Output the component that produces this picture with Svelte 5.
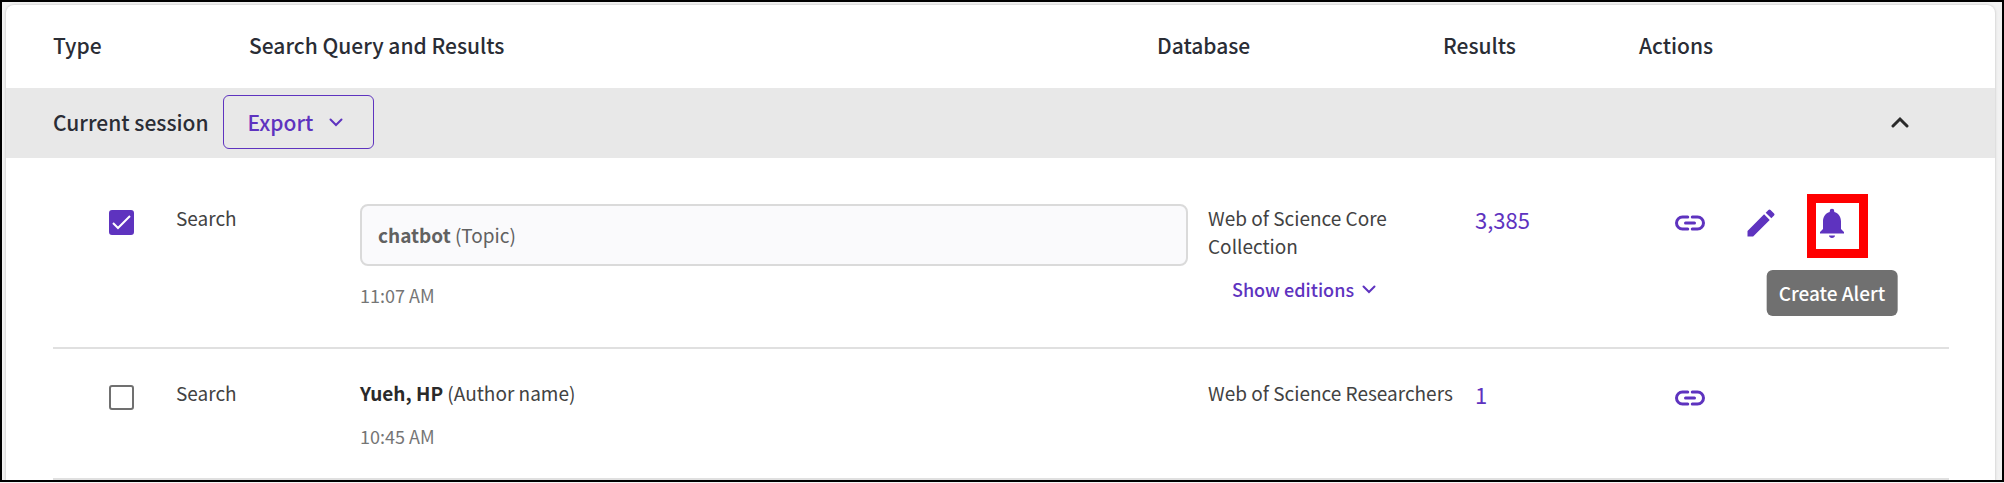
<script lang="ts">
	interface Entry {
		id: string;
		selected: boolean;
		type: string;
		term: string;
		field: string;
		boxed: boolean;
		time: string;
		database: string;
		editions: boolean;
		results: string;
		editable: boolean;
	}

	let entries: Entry[] = $state([
		{
			id: 'chatbot',
			selected: true,
			type: 'Search',
			term: 'chatbot',
			field: '(Topic)',
			boxed: true,
			time: '11:07 AM',
			database: 'Web of Science Core Collection',
			editions: true,
			results: '3,385',
			editable: true
		},
		{
			id: 'yueh',
			selected: false,
			type: 'Search',
			term: 'Yueh, HP',
			field: '(Author name)',
			boxed: false,
			time: '10:45 AM',
			database: 'Web of Science Researchers',
			editions: false,
			results: '1',
			editable: false
		}
	]);

	let open = $state(true);
</script>

<main class="page">
	<table class="history">
		<thead>
			<tr class="head-row">
				<th scope="col">Type</th>
				<th scope="col">Search Query and Results</th>
				<th scope="col">Database</th>
				<th scope="col">Results</th>
				<th scope="col">Actions</th>
			</tr>
		</thead>
		<tbody>
			<tr class="session-row">
				<th class="session" colspan="5">
					<span>Current session</span>
					<button class="export" type="button">
						Export
						<svg width="14" height="9" viewBox="0 0 14 9" aria-hidden="true">
							<path d="M1.5 1.5 7 7l5.5-5.5" />
						</svg>
					</button>
					<button
						class="toggle"
						type="button"
						aria-label="Toggle session"
						aria-expanded={open}
						onclick={() => (open = !open)}
					>
						<svg width="18" height="12" viewBox="0 0 18 12" aria-hidden="true">
							<path d="M2 10 9 3l7 7" />
						</svg>
					</button>
				</th>
			</tr>

			{#if open}
				{#each entries as entry (entry.id)}
					<tr class="entry">
						<td class="select">
							<input type="checkbox" aria-label="Select {entry.term}" bind:checked={entry.selected} />
						</td>
						<td>{entry.type}</td>
						<td class="query">
							<div class:boxed={entry.boxed}>
								<strong>{entry.term}</strong>
								{entry.field}
							</div>
							<time>{entry.time}</time>
						</td>
						<td>
							<div>{entry.database}</div>
							{#if entry.editions}
								<button class="editions" type="button">
									Show editions
									<svg width="14" height="9" viewBox="0 0 14 9" aria-hidden="true">
										<path d="M1.5 1.5 7 7l5.5-5.5" />
									</svg>
								</button>
							{/if}
						</td>
						<td class="results"><a href="#{entry.id}">{entry.results}</a></td>
						<td class="actions">
							<button type="button" aria-label="Copy link">
								<svg class="link" viewBox="0 0 24 24" aria-hidden="true">
									<path d="M10.500 8H7a4 4 0 0 0 0 8h3.500M13.500 8H17a4 4 0 0 1 0 8h-3.500M9 12h6" />
								</svg>
							</button>
							{#if entry.editable}
								<button type="button" aria-label="Edit">
									<svg viewBox="0 0 24 24" aria-hidden="true">
										<path
											d="M3 17.25V21h3.75L17.81 9.94l-3.75-3.75L3 17.25zM20.71 7.04a1 1 0 0 0 0-1.41l-2.34-2.34a1 1 0 0 0-1.41 0l-1.83 1.83 3.75 3.75 1.83-1.83z"
										/>
									</svg>
								</button>
								<button type="button" aria-labelledby="alert-tip">
									<svg viewBox="0 0 24 24" aria-hidden="true">
										<path
											d="M12 22c1.1 0 2-.6 2-1.6h-4c0 1 .9 1.6 2 1.6zm6-6v-5c0-3.07-1.64-5.64-4.5-6.32V4a1.5 1.5 0 0 0-3 0v.68C7.63 5.36 6 7.92 6 11v5l-2 2v1h16v-1l-2-2z"
										/>
									</svg>
									<span class="marker"></span>
									<span class="tooltip" id="alert-tip" role="tooltip">Create Alert</span>
								</button>
							{/if}
						</td>
					</tr>
				{/each}
			{/if}
		</tbody>
	</table>
</main>

<style>
	:global(body) {
		background: #f2f2f2;
	}

	.page {
		--purple: #5e33bf;
		--line: #e0e0e0;
		box-sizing: border-box;
		padding: 3px 7px 0 4px;
		border: 2px solid #000;
		overflow: hidden;
		font-family: 'Noto Sans CJK SC', 'Source Sans Pro', sans-serif;
		font-size: 19px;
		line-height: 28px;
		color: #424242;
	}

	.history,
	thead,
	tbody {
		display: block;
	}

	.history {
		border-radius: 8px 8px 0 0;
		background: #fff;
		box-shadow: 0 0 2px 1px #d8d8d8;
	}

	th,
	td {
		padding: 0;
		text-align: left;
	}

	th {
		font-size: 21px;
		font-weight: 500;
		color: #2a2d35;
	}

	.head-row {
		display: grid;
		grid-template-columns: 196px 1fr 286px 196px 310px;
		align-items: center;
		padding: 26px 46px 29px 47px;
	}

	.session-row {
		display: grid;
		background: #e8e8e8;
	}

	.session {
		display: flex;
		align-items: center;
		padding: 7px 86px 9px 47px;
	}

	button {
		padding: 0;
		border: 0;
		background: none;
		font: inherit;
		color: var(--purple);
		cursor: pointer;
	}

	button path {
		fill: currentColor;
	}

	.export path,
	.toggle path,
	.editions path,
	.link path {
		fill: none;
		stroke: currentColor;
		stroke-width: 2;
		stroke-linecap: round;
	}

	.export {
		display: flex;
		align-items: center;
		gap: 16px;
		margin-left: 14px;
		padding: 12px 30px 12px 24px;
		border: 1px solid var(--purple);
		border-radius: 6px;
	}

	.toggle {
		display: flex;
		margin-left: auto;
		color: #2a2a2a;
	}

	.toggle path {
		stroke-width: 3;
	}

	.entry {
		display: grid;
		grid-template-columns: 123px 184px 1fr 267px 197px 277px;
		margin: 0 46px 0 47px;
		padding: 46px 0 38px;
		border-bottom: 2px solid var(--line);
	}

	.entry + .entry {
		padding: 30px 0 28px;
	}

	.select {
		padding: 6px 0 0 56px;
	}

	input {
		display: block;
		appearance: none;
		box-sizing: border-box;
		width: 25px;
		height: 25px;
		margin: 0;
		border: 2px solid #707070;
		border-radius: 3px;
	}

	input:checked {
		border-color: var(--purple);
		background: var(--purple)
			url("data:image/svg+xml,%3Csvg xmlns='http://www.w3.org/2000/svg' viewBox='0 0 21 21'%3E%3Cpath d='M2 11 7 16 19 4' fill='none' stroke='white' stroke-width='2'/%3E%3C/svg%3E");
	}

	.query {
		padding-right: 20px;
	}

	.query strong {
		color: #2a2a2a;
	}

	.boxed,
	.boxed strong {
		color: #616161;
	}

	.boxed {
		padding: 15px 16px;
		border: 2px solid #dadada;
		border-radius: 8px;
		background: #fafafc;
	}

	time {
		display: block;
		margin-top: 15px;
		font-size: 18px;
		color: #757575;
	}

	.editions {
		display: flex;
		align-items: center;
		gap: 8px;
		margin: 15px 0 0 24px;
		font-size: 18px;
		font-weight: 500;
	}

	.results {
		font-size: 22px;
		line-height: 30px;
	}

	a {
		color: var(--purple);
		text-decoration: none;
	}

	.actions {
		display: flex;
		align-items: flex-start;
		gap: 35px;
		padding-top: 1px;
	}

	.actions button {
		position: relative;
		display: flex;
	}

	.actions svg {
		width: 36px;
		height: 36px;
	}

	.marker {
		position: absolute;
		inset: -11px -18px -17px -7px;
		border: 9px solid #f00;
	}

	.tooltip {
		position: absolute;
		top: 65px;
		left: 50%;
		padding: 9px 12px;
		border-radius: 6px;
		background: #707070;
		font-weight: 500;
		color: #fff;
		white-space: nowrap;
		transform: translateX(-50%);
	}
</style>
